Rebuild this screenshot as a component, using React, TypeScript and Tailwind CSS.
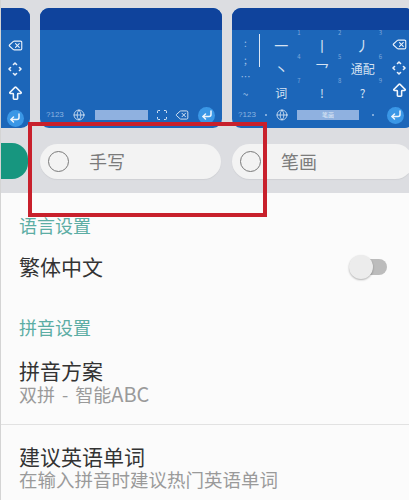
import { ArrowBigUp, CornerDownLeft, Delete, Globe, Scan } from "lucide-react";

const font = "font-['Noto_Sans_CJK_SC','Noto_Sans',sans-serif]";

function MoveDots() {
  return (
    <svg width="14" height="14" viewBox="0 0 14 14" fill="none" stroke="#e8f0fa" strokeWidth="1.6" strokeLinecap="round" strokeLinejoin="round">
      <path d="M5.500 2.500 7 1l1.500 1.500" />
      <path d="M5.500 11.500 7 13l1.500-1.500" />
      <path d="M2.500 5.500 1 7l1.500 1.500" />
      <path d="M11.500 5.500 13 7l-1.500 1.500" />
    </svg>
  );
}

function EnterKey() {
  return (
    <div className="flex h-[17px] w-[17px] items-center justify-center rounded-full bg-[#3a97e6]">
      <CornerDownLeft size={12} strokeWidth={3} color="#eef5fc" />
    </div>
  );
}

function SideKeys() {
  return (
    <div className="flex w-[30px] shrink-0 flex-col items-center">
      <div className="flex h-[24px] items-center">
        <Delete size={15} strokeWidth={1.8} color="#e8f0fa" />
      </div>
      <div className="flex h-[24px] items-center">
        <MoveDots />
      </div>
      <div className="flex h-[24px] items-center">
        <ArrowBigUp size={17} strokeWidth={2.2} color="#f2f6fb" />
      </div>
    </div>
  );
}

function Card({ children, end }: { children: React.ReactNode; end?: boolean }) {
  return (
    <div className="flex h-[120px] w-[182px] shrink-0 flex-col overflow-hidden rounded-[9px] bg-[#1c66b9]">
      <div className="h-[22px] shrink-0 bg-[#0f439c]" />
      <div className={`flex flex-1 flex-col ${end ? "items-end" : ""}`}>{children}</div>
    </div>
  );
}

function Stroke({ text, no, small }: { text: string; no: string; small?: boolean }) {
  return (
    <div className="relative flex h-[24px] items-center justify-center">
      <span className={`${small ? "text-[12px]" : "text-[14px]"} leading-none text-[#d5e2f2]`}>{text}</span>
      <span className="absolute right-[1px] top-[-3px] text-[6px] leading-none text-[#7fa9dc]">{no}</span>
    </div>
  );
}

function StrokeKeyboard() {
  return (
    <Card>
      <div className={`flex h-[72px] pt-[3px] ${font}`}>
        <div className="flex w-[27px] flex-col items-center gap-[4px] pt-[3px] text-[10px] leading-[13px] text-[#9fc0e6]">
          <span>:</span>
          <span>;</span>
          <span>…</span>
          <span>~</span>
        </div>
        <div className="mt-[1px] h-[33px] w-[1px] bg-[#dbe7f5]" />
        <div className="grid flex-1 grid-cols-3 px-[1px]">
          <Stroke text="一" no="1" />
          <Stroke text="丨" no="2" />
          <Stroke text="丿" no="3" />
          <Stroke text="丶" no="4" />
          <Stroke text="乛" no="5" />
          <Stroke text="通配" no="6" small />
          <Stroke text="词" no="7" small />
          <Stroke text="!" no="8" small />
          <Stroke text="?" no="9" small />
        </div>
        <SideKeys />
      </div>
      <div className="flex h-[26px] items-center">
        <span className="w-[30px] text-center font-['Liberation_Sans',sans-serif] text-[8px] text-[#8db4e0]">?123</span>
        <span className="ml-[3px] h-[2px] w-[2px] rounded-full bg-[#9fc0e6]" />
        <Globe size={12} strokeWidth={1.500} color="#e8f0fa" className="ml-[9px]" />
        <div className={`ml-[9px] flex h-[10px] w-[62px] items-center justify-center bg-[#8fb1e0] text-[6px] leading-none text-[#dfe9f5] ${font}`}>笔画</div>
        <span className="ml-[13px] h-[2px] w-[2px] rounded-full bg-[#9fc0e6]" />
        <div className="ml-[13px]">
          <EnterKey />
        </div>
      </div>
    </Card>
  );
}

function HandKeyboard() {
  return (
    <Card>
      <div className="flex-1" />
      <div className="flex h-[26px] items-center">
        <span className="ml-[6px] w-[18px] font-['Liberation_Sans',sans-serif] text-[8px] text-[#8db4e0]">?123</span>
        <Globe size={12} strokeWidth={1.500} color="#e8f0fa" className="ml-[9px]" />
        <div className="ml-[10px] h-[10px] w-[53px] bg-[#8fb1e0]" />
        <Scan size={12} strokeWidth={2} color="#e8f0fa" className="ml-[8px]" />
        <Delete size={14} strokeWidth={1.600} color="#dfe9f5" className="ml-[7px]" />
        <div className="ml-[9px]">
          <EnterKey />
        </div>
      </div>
    </Card>
  );
}

function Pill({ label }: { label: string }) {
  return (
    <div className="flex h-[35px] w-[181px] shrink-0 items-center rounded-full bg-[#f3f3f3] pl-[8px] shadow-[0_1px_1px_#cfd0d4]">
      <span className="h-[21px] w-[21px] rounded-full border-[1.5px] border-[#7a7a7a]" />
      <span className={`ml-[20px] text-[18px] leading-none text-[#7b7b7b] ${font}`}>{label}</span>
    </div>
  );
}

export default function App() {
  return (
    <div className={`relative h-[500px] w-[409px] overflow-hidden border-l border-[#d4d4d4] bg-[#fbfbfb] ${font}`}>
      <div className="h-[193px] bg-[#dcdde1] pt-[8px]">
        <div className="-ml-[153px] flex gap-[10px]">
          <Card end>
            <div className="flex-1 pt-[3px]">
              <SideKeys />
            </div>
            <div className="flex h-[26px] w-[30px] items-center justify-center">
              <EnterKey />
            </div>
          </Card>
          <HandKeyboard />
          <StrokeKeyboard />
        </div>
        <div className="mt-[15px] flex items-center">
          <div className="h-[36px] w-[27px] shrink-0 rounded-r-[16px] bg-[#17967f]" />
          <div className="ml-[12px] flex gap-[11px]">
            <Pill label="手写" />
            <Pill label="笔画" />
          </div>
        </div>
      </div>

      <div className="pl-[18px]">
        <div className="mt-[21px] text-[18px] leading-[22px] text-[#5cada4]">语言设置</div>
        <div className="mt-[15px] flex h-[30px] items-center justify-between pr-[22px]">
          <span className="text-[21px] leading-none text-[#333333]">繁体中文</span>
          <div className="relative mt-[2px] flex h-[16px] w-[37px] items-center rounded-full bg-[#bcbcbc]">
            <span className="absolute -left-[1px] h-[24px] w-[24px] rounded-full bg-[#ececec] shadow-[0_1px_2px_rgba(0,0,0,0.3)]" />
          </div>
        </div>
        <div className="mt-[35px] text-[18px] leading-[22px] text-[#5cada4]">拼音设置</div>
        <div className="mt-[20px] text-[21px] leading-[24px] text-[#333333]">拼音方案</div>
        <div className="mt-[2px] text-[18px] leading-[20px] text-[#9a9a9a] [word-spacing:3px]">
          双拼 - 智能<span className="text-[20px]">ABC</span>
        </div>
      </div>
      <div className="mt-[20px] h-[1px] bg-[#e2e2e2]" />
      <div className="pl-[18px]">
        <div className="mt-[19px] text-[21px] leading-[24px] text-[#333333]">建议英语单词</div>
        <div className="mt-[1px] text-[18.500px] leading-[20px] whitespace-nowrap text-[#9a9a9a]">在输入拼音时建议热门英语单词</div>
      </div>

      <div className="absolute left-[27px] top-[122px] h-[95px] w-[239px] border-[4px] border-[#c8202c]" />
    </div>
  );
}
